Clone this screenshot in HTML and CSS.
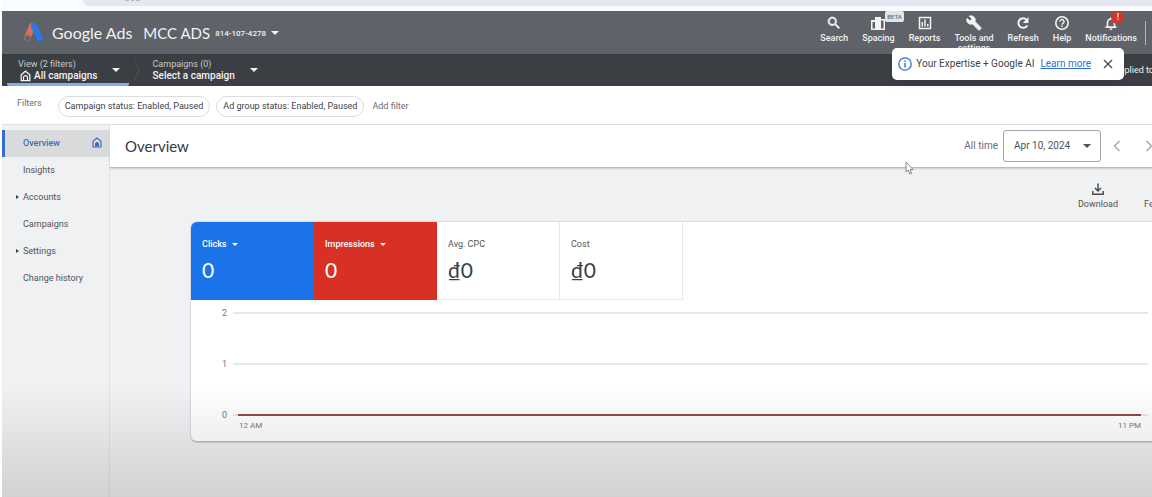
FILE: index.html
```html
<!DOCTYPE html>
<html lang="en">
<head>
<meta charset="utf-8">
<title>Overview - Google Ads</title>
<link rel="stylesheet" href="styles.css">
</head>
<body>
<div class="page">
  <div class="browser-strip">
    <div class="address-bar">
      <svg class="address-marks" width="60" height="1" viewBox="0 0 60 1" aria-hidden="true"><path d="M26 0h4v1h-4zM32 0h3v1h-3zM37 0h4v1h-4z" fill="#b6b8c0"/></svg>
    </div>
  </div>

  <header class="topbar">
    <svg class="logo" width="20" height="19" viewBox="0 0 20 19" aria-hidden="true">
      <path d="M8 3.500 3.400 14.800" stroke="#d9705f" stroke-width="6.400" stroke-linecap="round"/>
      <path d="M10 3.400 15.800 15.200" stroke="#2a78e4" stroke-width="6.200" stroke-linecap="round"/>
      <circle cx="3.600" cy="15.200" r="3" fill="#666468" stroke="#7c7878"/>
    </svg>
    <span class="brand">Google Ads</span>
    <button class="account" type="button"><span class="account-name">MCC ADS</span><span class="account-id">814-107-4278</span><span class="caret"></span></button>
    <nav class="tools" aria-label="Tools">
      <button class="tool" type="button">
        <svg width="16" height="16" viewBox="0 0 24 24" aria-hidden="true"><path d="M15.500 14h-.8l-.3-.3A6.500 6.500 0 1 0 13.700 14.400l.3.3v.8l5 5 1.500-1.500zM9.500 14a4.500 4.500 0 1 1 0-9 4.500 4.500 0 0 1 0 9z" stroke="currentColor" stroke-width="1"/></svg>
        <span>Search</span>
      </button>
      <button class="tool" type="button">
        <svg width="16" height="16" viewBox="0 0 16 16" aria-hidden="true"><path fill-rule="evenodd" d="M1 5h4V2h6v2h4v11H1zm1.500 2v6.500H5V7zM11 5.500v8h2.500v-8z"/></svg>
        <span>Spacing</span><span class="beta">BETA</span>
      </button>
      <button class="tool" type="button">
        <svg width="16" height="16" viewBox="0 0 16 16" aria-hidden="true"><path d="M2.500 2.500h11v11h-11z" fill="none" stroke="currentColor" stroke-width="1.500"/><path d="M4.500 7h1.500v4.500H4.500zM7.200 4.500h1.500v7H7.200zM10 9h1.500v2.500H10z"/></svg>
        <span>Reports</span>
      </button>
      <button class="tool" type="button">
        <svg width="16" height="16" viewBox="0 0 24 24" aria-hidden="true"><path d="m22.700 19-9.100-9.100c.9-2.300.4-5-1.500-6.900-2-2-5-2.400-7.400-1.300L9 6 6 9 1.600 4.700C.4 7.100.9 10.100 2.900 12.100c1.900 1.900 4.600 2.400 6.900 1.500l9.100 9.100c.4.4 1 .4 1.400 0l2.300-2.300c.5-.4.5-1.100.1-1.400z" stroke="currentColor"/></svg>
        <span>Tools and<br>settings</span>
      </button>
      <button class="tool" type="button">
        <svg width="16" height="16" viewBox="0 0 16 16" aria-hidden="true"><path d="M12.300 10.500A4.800 4.800 0 1 1 11.500 4.600" fill="none" stroke="currentColor" stroke-width="2"/><path d="M13.500 2v6H7.800z"/></svg>
        <span>Refresh</span>
      </button>
      <button class="tool" type="button">
        <svg width="16" height="16" viewBox="0 0 16 16" aria-hidden="true"><circle cx="8" cy="8" r="6.200" fill="none" stroke="currentColor" stroke-width="1.600"/><path d="M6 6.700a2 2 0 1 1 3 1.600c-.7.5-1 .8-1 1.500" fill="none" stroke="currentColor" stroke-width="1.400"/><path d="M7.300 10.600h1.400V12H7.300z"/></svg>
        <span>Help</span>
      </button>
      <button class="tool" type="button">
        <svg width="16" height="16" viewBox="0 0 16 16" aria-hidden="true"><path d="M4.500 12V7.500a3.500 3.500 0 0 1 7 0V12" fill="none" stroke="currentColor" stroke-width="1.600"/><path d="M2.500 11.200h11V13h-11zM7 2.500h2v2H7zM6.500 13.600h3a1.500 1.500 0 0 1-3 0z"/></svg>
        <span>Notifications</span><span class="alert">!</span>
      </button>
    </nav>
  </header>

  <div class="scopebar">
    <button class="scope scope-view" type="button">
      <span class="scope-text"><span class="scope-label">View (2 filters)</span>
      <span class="scope-value"><svg width="11" height="12" viewBox="0 0 11 12" aria-hidden="true"><path d="M1.200 4.700 5.500 1.200l4.300 3.500v6H1.200z" fill="none" stroke="currentColor" stroke-width="1.300"/><path d="M3.500 10.500V7.700a2 2 0 0 1 4 0v2.800" fill="none" stroke="currentColor" stroke-width="1.200"/></svg>All campaigns</span></span>
      <span class="caret"></span>
    </button>
    <svg class="chevron" width="6" height="22" viewBox="0 0 6 22" aria-hidden="true"><path d="M1 1 5 11 1 21" fill="none" stroke="#4d5056"/></svg>
    <button class="scope" type="button">
      <span class="scope-text"><span class="scope-label">Campaigns (0)</span>
      <span class="scope-value">Select a campaign</span></span>
      <span class="caret"></span>
    </button>
    <span class="applied">applied to</span>
    <div class="promo" role="status">
      <svg width="14" height="14" viewBox="0 0 14 14" aria-hidden="true"><circle cx="7" cy="7" r="6.200" fill="none" stroke="#2f6fd0" stroke-width="1.300"/><path d="M6.300 6h1.400v4.500H6.300zM6.300 3.500h1.400V5H6.300z" fill="#2f6fd0"/></svg>
      <span class="promo-text">Your Expertise + Google AI</span>
      <a class="promo-link" href="#">Learn more</a>
      <button class="close" type="button" aria-label="Close"><svg width="10" height="10" viewBox="0 0 10 10" aria-hidden="true"><path d="m1 1 8 8M9 1 1 9" stroke="#4a4d52" stroke-width="1.400"/></svg></button>
    </div>
  </div>

  <div class="filters">
    <span class="filters-label">Filters</span>
    <button class="chip" type="button">Campaign status: Enabled, Paused</button>
    <button class="chip" type="button">Ad group status: Enabled, Paused</button>
    <button class="add-filter" type="button">Add filter</button>
  </div>

  <div class="body">
    <nav class="sidebar" aria-label="Pages">
      <a class="item active" href="#">Overview
        <svg width="10" height="11" viewBox="0 0 10 11" aria-hidden="true"><path d="M1 4.200 5 1l4 3.200V10H1z" fill="none" stroke="#3b6fb8" stroke-width="1.200"/><path d="M3 9.500V7a2 2 0 0 1 4 0v2.500z" fill="#3b6fb8"/></svg></a>
      <a class="item" href="#">Insights</a>
      <a class="item parent" href="#">Accounts</a>
      <a class="item" href="#">Campaigns</a>
      <a class="item parent" href="#">Settings</a>
      <a class="item" href="#">Change history</a>
    </nav>

    <main class="main">
      <div class="titlebar">
        <h1 class="title">Overview</h1>
        <label class="range-label" for="range">All time</label>
        <span class="picker"><select id="range"><option>Apr 10, 2024</option></select><span class="caret"></span></span>
        <button class="step" type="button" aria-label="Previous"><svg width="8" height="12" viewBox="0 0 8 12" aria-hidden="true"><path d="M6.500 1 1.500 6l5 5" fill="none" stroke="#a2a4a8" stroke-width="1.300"/></svg></button>
        <button class="step" type="button" aria-label="Next"><svg width="8" height="12" viewBox="0 0 8 12" aria-hidden="true"><path d="m1.500 1 5 5-5 5" fill="none" stroke="#a2a4a8" stroke-width="1.300"/></svg></button>
        <svg class="cursor" width="9" height="14" viewBox="0 0 9 14" aria-hidden="true"><path d="M1 1v10l2.200-2 1.600 4 1.700-.7L5 8.500h3z" fill="#fff" stroke="#77797d" stroke-width=".9"/></svg>
      </div>

      <div class="actions">
        <button class="action" type="button"><svg width="14" height="14" viewBox="0 0 14 14" aria-hidden="true"><path d="M7 1.500v7M4 6l3 3 3-3M1.800 9v3.200h10.400V9" fill="none" stroke="#4a4d52" stroke-width="1.500"/></svg><span>Download</span></button>
        <button class="action feedback" type="button"><span>Feedback</span></button>
      </div>

      <section class="card" aria-label="Performance">
        <div class="metrics">
          <button class="metric clicks" type="button"><span class="metric-name">Clicks<span class="caret"></span></span><span class="metric-value">0</span></button>
          <button class="metric impressions" type="button"><span class="metric-name">Impressions<span class="caret"></span></span><span class="metric-value">0</span></button>
          <button class="metric" type="button"><span class="metric-name">Avg. CPC</span><span class="metric-value">₫0</span></button>
          <button class="metric" type="button"><span class="metric-name">Cost</span><span class="metric-value">₫0</span></button>
        </div>
        <div class="chart">
          <div class="gridline"><span>2</span></div>
          <div class="gridline"><span>1</span></div>
          <div class="gridline zero"><span>0</span></div>
          <div class="hours"><span>12 AM</span><span>11 PM</span></div>
        </div>
      </section>
    </main>
  </div>
  <div class="shade"></div>
</div>
</body>
</html>
```
FILE: styles.css
```css
* { box-sizing: border-box; }
body {
  margin: 0;
  font-family: Roboto, "Liberation Sans", sans-serif;
  font-size: 9px;
  line-height: 12px;
  color: #505358;
  background: #fff;
}
button {
  margin: 0;
  padding: 0;
  border: 0;
  background: none;
  font: inherit;
  color: inherit;
  text-align: left;
}
a { color: inherit; text-decoration: none; }
svg { display: block; flex: none; }
.page {
  position: relative;
  display: flex;
  flex-direction: column;
  min-height: 100vh;
  padding-left: 2px;
  overflow: hidden;
}
.caret {
  flex: none;
  border: 4px solid transparent;
  border-top-color: currentColor;
  border-bottom: 0;
}

.browser-strip { height: 11px; padding-left: 81px; background: #fafbfe; }
.address-bar { height: 6px; padding-left: 16px; background: #e4e8f3; border-bottom-left-radius: 8px; }

.topbar {
  display: flex;
  align-items: center;
  height: 43px;
  padding: 0 6px 0 22px;
  background: #5f6268;
  color: #f3f3f4;
}
.brand, .account-name { font-family: Lato, sans-serif; font-size: 16px; line-height: 20px; }
.brand { margin: 0 11px 0 8px; }
.account { display: flex; align-items: center; gap: 5px; }
.account-name { font-size: 15px; }
.account-id { padding-top: 3px; font-size: 8px; font-weight: 500; }
.tools {
  display: flex;
  align-items: flex-start;
  gap: 14px;
  height: 35px;
  margin-left: auto;
  padding-right: 8px;
  border-right: 1px solid transparent;
  border-image: linear-gradient(transparent 20%, #b5b7ba 20% 85%, transparent 85%) 1;
}
.tool {
  position: relative;
  display: flex;
  flex-direction: column;
  align-items: center;
  gap: 2px;
  line-height: 10px;
  font-weight: 500;
  text-align: center;
  white-space: nowrap;
}
.tool svg { fill: currentColor; }
.beta {
  position: absolute;
  top: -4px;
  left: 23px;
  padding: 0 2px;
  border-radius: 2px;
  background: #e3e4e6;
  color: #6a6d72;
  font-size: 6px;
  line-height: 11px;
}
.alert {
  position: absolute;
  top: -4px;
  left: 26px;
  width: 13px;
  border-radius: 50%;
  background: #cf3730;
  line-height: 13px;
}

.scopebar {
  position: relative;
  display: flex;
  align-items: center;
  height: 32px;
  background: #3b3e43;
  color: #f3f3f4;
}
.scope { display: flex; align-items: center; gap: 15px; height: 32px; }
.scope-view {
  margin-left: 5px;
  padding: 2px 9px 0 11px;
  border-bottom: 3px solid #86abe8;
  border-radius: 0 0 2px 2px;
}
.scope-text { display: flex; flex-direction: column; white-space: nowrap; }
.scope-label { color: #c6c8cb; }
.scope-value { display: flex; align-items: center; gap: 3px; font-size: 10px; font-weight: 500; }
.scope-value svg { margin-left: 2px; }
.chevron { margin: 0 12px 0 5px; }
.applied { margin-left: auto; margin-right: -2px; }
.promo {
  position: absolute;
  z-index: 2;
  top: -6px;
  right: 28px;
  display: flex;
  align-items: center;
  height: 32px;
  padding: 0 11px 0 6px;
  border-radius: 5px;
  background: #fff;
  box-shadow: 0 4px 8px rgba(0, 0, 0, .08);
  color: #3f4247;
  font-size: 10px;
  white-space: nowrap;
}
.promo-text { margin: 0 6px 0 4px; }
.promo-link { color: #2f6fd0; text-decoration: underline; }
.close { margin-left: 12px; }

.filters {
  display: flex;
  align-items: center;
  gap: 6px;
  height: 39px;
  padding: 2px 15px 0;
  border-bottom: 1px solid #dfe0e2;
  color: #6b6e73;
  background: #fff;
}
.filters-label { margin-right: 10px; padding-bottom: 6px; }
.chip {
  height: 21px;
  padding: 0 6px;
  border: 1px solid #dcdde0;
  border-radius: 11px;
  color: #3f4247;
  white-space: nowrap;
}
.add-filter { margin-left: 2px; }

.body { display: flex; flex: 1; background: #f0f1f3; }
.sidebar { flex: none; width: 108px; padding-top: 5px; border-right: 1px solid #e3e4e7; }
.item {
  position: relative;
  display: flex;
  align-items: center;
  justify-content: space-between;
  height: 27px;
  padding: 0 7px 2px 21px;
}
.active {
  padding-left: 18px;
  border-left: 3px solid #3470c8;
  background: #d9dadc;
  color: #3b6fb8;
  font-weight: 500;
}
.parent::before {
  content: "";
  position: absolute;
  left: 14px;
  border: 2px solid transparent;
  border-left: 3px solid #3f4247;
  border-right: 0;
}
.main { flex: 1; min-width: 0; }
.titlebar {
  position: relative;
  display: flex;
  align-items: center;
  height: 43px;
  padding-left: 15px;
  border-bottom: 1px solid #b9bbbe;
  background: #fff;
  box-shadow: 0 1px 2px rgba(0, 0, 0, .15);
}
.title {
  margin: 0 auto 0 0;
  font-family: Lato, sans-serif;
  font-size: 15px;
  line-height: 20px;
  font-weight: 400;
  color: #35383d;
}
.range-label { margin-right: 5px; font-size: 10px; color: #6b6e73; }
.picker { position: relative; display: flex; align-items: center; width: 98px; height: 32px; }
.picker select {
  appearance: none;
  width: 100%;
  height: 100%;
  margin: 0;
  padding: 0 10px;
  border: 1px solid #a2a4a8;
  border-radius: 3px;
  background: #fff;
  font: inherit;
  font-size: 10px;
  color: #505358;
}
.picker .caret { position: absolute; right: 10px; pointer-events: none; }
.step { margin-left: 12px; }
.step + .step { margin-left: 24px; margin-right: -1px; }
.cursor { position: absolute; left: 795px; top: 36px; }

.actions {
  display: flex;
  justify-content: flex-end;
  align-items: flex-end;
  gap: 26px;
  height: 53px;
  padding-bottom: 11px;
}
.action { display: flex; flex-direction: column; align-items: center; gap: 2px; white-space: nowrap; }
.feedback { width: 8px; align-items: flex-start; }

.card {
  margin-left: 80px;
  height: 221px;
  border: 1px solid #dcdde1;
  border-right: 0;
  border-bottom: 1px solid #bfc1c4;
  border-radius: 7px 0 0 7px;
  background: #fff;
  box-shadow: 0 1px 1px rgba(0, 0, 0, .15);
  overflow: hidden;
}
.metrics { display: flex; }
.metric {
  display: flex;
  flex-direction: column;
  gap: 8px;
  width: 123px;
  height: 78px;
  padding: 16px 10px 0 11px;
  border-right: 1px solid #e8e9ec;
  border-bottom: 1px solid #e8e9ec;
}
.clicks, .impressions { border: 0; color: #fff; }
.clicks { background: #1a73e8; }
.impressions { background: #d93025; }
.metric-name { display: flex; align-items: center; gap: 5px; }
.metric-name .caret { border-width: 3px 3px 0; }
.clicks .metric-name, .impressions .metric-name { font-weight: 500; }
.metric-value { font-family: Lato, "Open Sans", sans-serif; font-size: 21px; line-height: 24px; color: #3c4043; }
.clicks .metric-value, .impressions .metric-value { color: #fff; }

.chart { padding: 7px 4px 0 31px; color: #777a7f; }
.gridline { display: flex; align-items: center; gap: 6px; height: 12px; margin-bottom: 39px; }
.gridline::after { content: ""; flex: 1; height: 2px; background: #e6e7e9; }
.zero { margin-bottom: 0; }
.zero::after { background: linear-gradient(90deg, #e6e7e9 5px, #9b4448 5px calc(100% - 7px), #e6e7e9 calc(100% - 7px)); }
.hours { display: flex; justify-content: space-between; padding: 0 7px 0 17px; font-size: 8px; line-height: 10px; }

.shade {
  position: absolute;
  left: 2px;
  right: 0;
  bottom: 0;
  height: 112px;
  background: linear-gradient(rgba(0, 0, 0, 0), rgba(0, 0, 0, .13));
  pointer-events: none;
}
```
